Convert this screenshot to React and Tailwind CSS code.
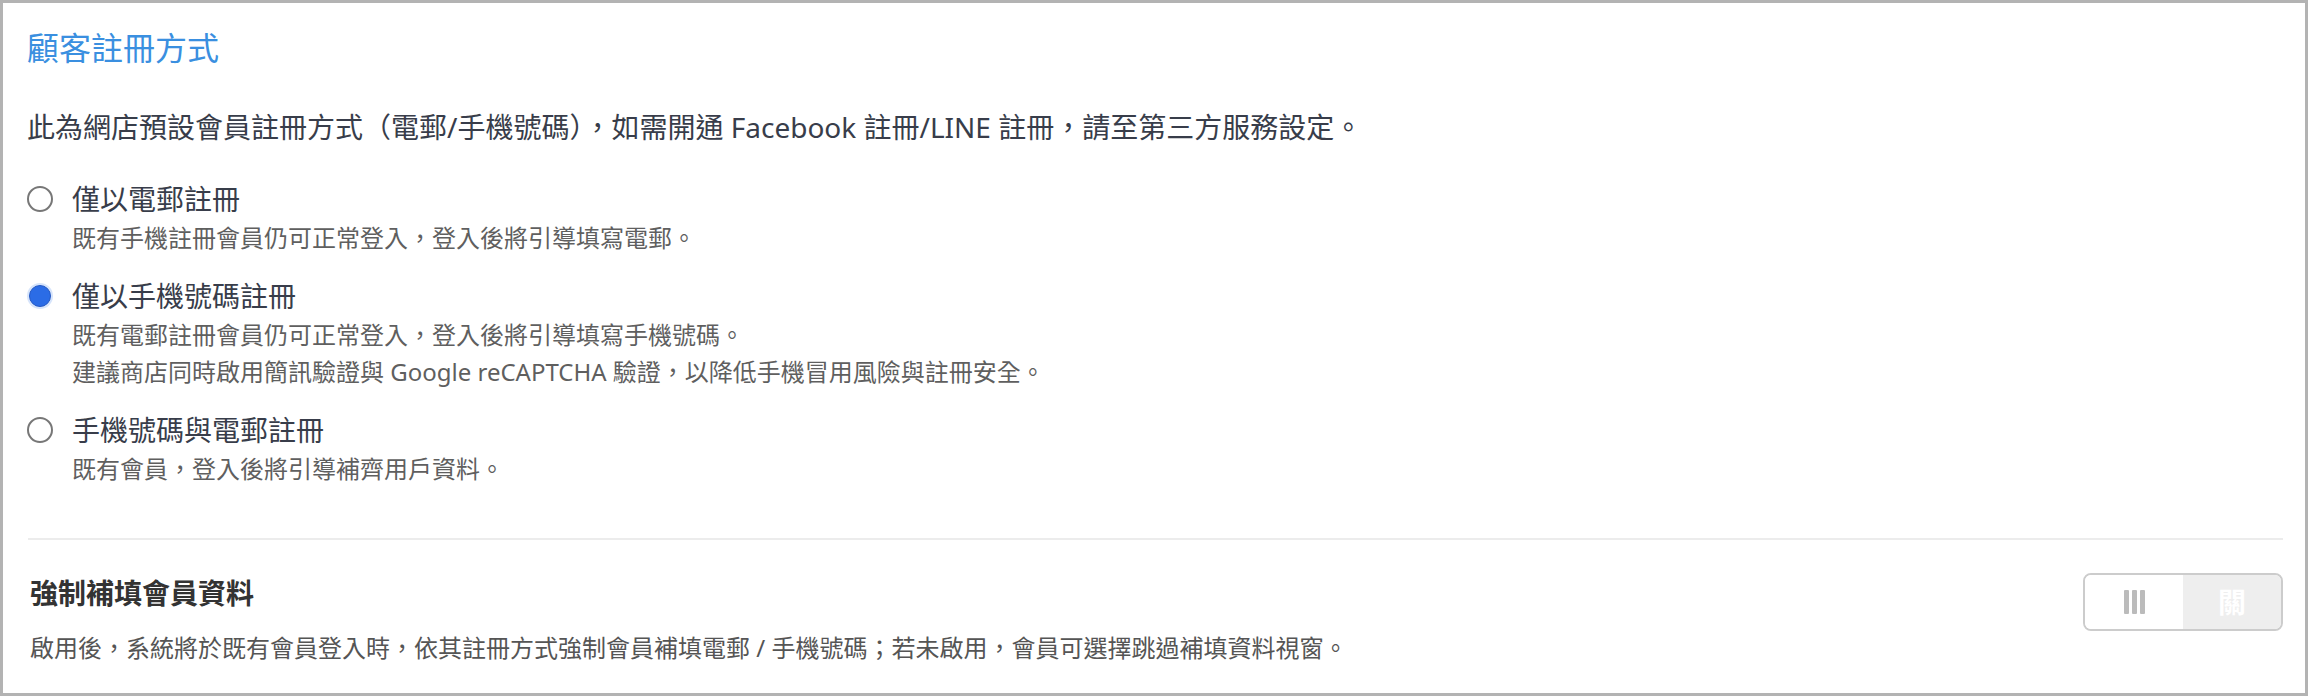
import { useState } from "react";

const options = [
  {
    id: "email",
    label: "僅以電郵註冊",
    notes: ["既有手機註冊會員仍可正常登入，登入後將引導填寫電郵。"],
  },
  {
    id: "phone",
    label: "僅以手機號碼註冊",
    notes: [
      "既有電郵註冊會員仍可正常登入，登入後將引導填寫手機號碼。",
      "建議商店同時啟用簡訊驗證與 Google reCAPTCHA 驗證，以降低手機冒用風險與註冊安全。",
    ],
  },
  {
    id: "both",
    label: "手機號碼與電郵註冊",
    notes: ["既有會員，登入後將引導補齊用戶資料。"],
  },
];

function Radio({ checked }) {
  if (checked) {
    return (
      <span className="w-[26px] h-[26px] rounded-full bg-[#d6e4fb] flex items-center justify-center shrink-0">
        <span className="w-[22px] h-[22px] rounded-full bg-[#2b6ce6] border border-[#2559c4]" />
      </span>
    );
  }
  return <span className="w-[26px] h-[26px] rounded-full border-2 border-[#777777] bg-white shrink-0" />;
}

export default function App() {
  const [method, setMethod] = useState("phone");
  const [forceFill, setForceFill] = useState(false);

  return (
    <div className="w-[2308px] h-[696px] bg-white border-[3px] border-[#b3b3b3] pt-[21px] pl-[24px] pr-[22px] font-['Noto_Sans','Noto_Sans_CJK_TC',sans-serif]">
      <h2 className="text-[32px] leading-[48px] text-[#3a8fe0] font-normal">顧客註冊方式</h2>

      <p className="mt-[35px] text-[28px] leading-[40px] text-[#383d4a]">
        此為網店預設會員註冊方式（電郵/手機號碼），如需開通 Facebook 註冊/LINE 註冊，請至第三方服務設定。
      </p>

      <div className="mt-[32px] flex flex-col gap-[20px]">
        {options.map((o) => (
          <div key={o.id} className="flex flex-col cursor-pointer" onClick={() => setMethod(o.id)}>
            <div className="flex items-center h-[40px]">
              <span className="w-[26px] flex justify-center">
                <Radio checked={method === o.id} />
              </span>
              <span className="ml-[19px] text-[28px] leading-[40px] text-[#383d4a]">{o.label}</span>
            </div>
            {o.notes.map((n) => (
              <div key={n} className="pl-[45px] text-[24px] leading-[37px] text-[#5f5f5f]">
                {n}
              </div>
            ))}
          </div>
        ))}
      </div>

      <div className="mt-[51px] ml-[1px] h-[2px] bg-[#ececec]" />

      <div className="mt-[33px] flex items-start justify-between">
        <div className="pl-[3px]">
          <h3 className="text-[28px] leading-[40px] font-bold text-[#333333]">強制補填會員資料</h3>
          <p className="mt-[17px] text-[24px] leading-[36px] text-[#555555]">
            啟用後，系統將於既有會員登入時，依其註冊方式強制會員補填電郵 / 手機號碼；若未啟用，會員可選擇跳過補填資料視窗。
          </p>
        </div>

        <button
          onClick={() => setForceFill(!forceFill)}
          className="w-[200px] h-[58px] border-2 border-[#cccccc] rounded-[8px] overflow-hidden flex"
        >
          <span className="flex-1 h-full bg-white flex items-center justify-center gap-[3px]">
            <span className="w-[5px] h-[24px] rounded-[1px] bg-[#bbbbbb]" />
            <span className="w-[5px] h-[24px] rounded-[1px] bg-[#bbbbbb]" />
            <span className="w-[5px] h-[24px] rounded-[1px] bg-[#bbbbbb]" />
          </span>
          <span className="flex-1 h-full bg-[#eeeeee] flex items-center justify-center text-[28px] font-bold text-white">
            關
          </span>
        </button>
      </div>
    </div>
  );
}
